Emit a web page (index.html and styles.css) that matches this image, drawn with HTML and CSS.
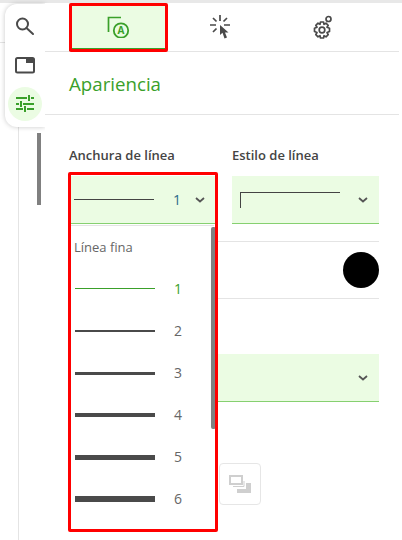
FILE: index.html
```html
<!DOCTYPE html>
<html lang="es">
<head>
    <meta charset="UTF-8">
    <meta name="viewport" content="width=device-width, initial-scale=1.0">
    <title>Apariencia</title>
    <link rel="stylesheet" href="styles.css">
</head>
<body>
    <div class="app">
        <!-- Fondo del documento y barra de iconos -->
        <div class="side">
            <div class="doc-rule"></div>
            <div class="doc-line"></div>
            <div class="doc-thumb"></div>
            <div class="toolbar">
                <div class="tool">
                    <svg width="22" height="22" viewBox="0 0 22 22" fill="none" stroke="#4a4a4a" stroke-width="2">
                        <circle cx="8.500" cy="9" r="5.500"/>
                        <path d="M12.500 13L19 19" stroke-linecap="round"/>
                    </svg>
                </div>
                <div class="tool">
                    <svg width="22" height="22" viewBox="0 0 22 22">
                        <rect x="2" y="4" width="18" height="14.500" rx="1.500" fill="none" stroke="#4a4a4a" stroke-width="2"/>
                        <rect x="12" y="4" width="8" height="5" fill="#4a4a4a"/>
                    </svg>
                </div>
                <div class="tool tool-on">
                    <svg width="22" height="22" viewBox="0 0 22 22" fill="none" stroke="#3aa02a" stroke-width="2">
                        <path d="M2 5H13M17 5H20M15 2V8M2 11H5M9 11H20M7 8V14M2 16H9M13 16H20M11 13V19"/>
                    </svg>
                </div>
            </div>
        </div>

        <div class="panel">
            <div class="tabs">
                <div class="tab tab-on">
                    <svg width="24" height="24" viewBox="0 0 24 24" fill="none" stroke="#3aa02a" stroke-width="1.700">
                        <path d="M15 3.500H2.500V18"/>
                        <circle cx="15" cy="16.500" r="7.200" stroke-width="1.800"/>
                        <text x="15" y="20.300" text-anchor="middle" class="tab-letter">A</text>
                    </svg>
                </div>
                <div class="tab">
                    <svg width="24" height="26" viewBox="0 0 24 26" fill="none" stroke="#4a4a4a" stroke-width="1.700">
                        <path d="M12 2V8M2 12H8M16 12H22M5 5L8.500 8.500M19 5L15.500 8.500M5 19L8.500 15.500"/>
                        <path d="M12 12V22L14.500 19.800L16.500 25.500L19 24.500L17 19.500H20.500Z" fill="#4a4a4a" stroke="none"/>
                    </svg>
                </div>
                <div class="tab">
                    <svg width="24" height="26" viewBox="0 0 24 26" fill="none" stroke="#4a4a4a" stroke-width="1.700">
                        <circle cx="12" cy="17" r="2.800"/>
                        <path d="M10.500 9H13.500L14 11.300L16 10.200L18.200 12.300L17 14.300L19.500 15.300V18.500L17 19.500L18.200 21.700L16 23.800L14 22.700L13.500 25H10.500L10 22.700L8 23.800L5.800 21.700L7 19.500L4.500 18.500V15.300L7 14.300L5.800 12.300L8 10.200L10 11.300Z" stroke-linejoin="round"/>
                        <circle cx="18.500" cy="6" r="2.500"/>
                    </svg>
                </div>
            </div>

            <div class="section-head">
                <h2>Apariencia</h2>
            </div>

            <div class="form">
                <div class="fields">
                    <div class="field">
                        <label>Anchura de línea</label>
                        <div class="select">
                            <span class="sample"></span>
                            <span class="value">1</span>
                            <svg class="chev" width="10" height="6" viewBox="0 0 10 6"><path d="M1 1L5 4.500L9 1" fill="none" stroke="#555" stroke-width="1.800"/></svg>
                        </div>
                    </div>
                    <div class="field">
                        <label>Estilo de línea</label>
                        <div class="select select-style">
                            <span class="corner"></span>
                            <svg class="chev" width="10" height="6" viewBox="0 0 10 6"><path d="M1 1L5 4.500L9 1" fill="none" stroke="#555" stroke-width="1.800"/></svg>
                        </div>
                    </div>
                </div>
                <div class="color-row"><span class="swatch"></span></div>
                <div class="select select-wide">
                    <svg class="chev" width="10" height="6" viewBox="0 0 10 6"><path d="M1 1L5 4.500L9 1" fill="none" stroke="#555" stroke-width="1.800"/></svg>
                </div>
                <div class="actions">
                    <button class="icon-btn">
                        <svg width="22" height="18" viewBox="0 0 22 18">
                            <rect x="1" y="1" width="12" height="8" fill="none" stroke="#cfcfcf" stroke-width="2"/>
                            <path d="M4 11.500H15V6" fill="none" stroke="#cfcfcf" stroke-width="1"/>
                            <path d="M8 18V14H17V8H22V18Z" fill="#cfcfcf"/>
                        </svg>
                    </button>
                </div>
            </div>

            <!-- Lista desplegable abierta -->
            <div class="dropdown">
                <div class="drop-title">Línea fina</div>
                <div class="option option-on"><span class="bar bar-1"></span><span class="num">1</span></div>
                <div class="option"><span class="bar bar-2"></span><span class="num">2</span></div>
                <div class="option"><span class="bar bar-3"></span><span class="num">3</span></div>
                <div class="option"><span class="bar bar-4"></span><span class="num">4</span></div>
                <div class="option"><span class="bar bar-5"></span><span class="num">5</span></div>
                <div class="option"><span class="bar bar-6"></span><span class="num">6</span></div>
                <div class="scroll-thumb"></div>
            </div>

            <!-- Marcas rojas -->
            <div class="mark mark-tab"></div>
            <div class="mark mark-list"></div>
        </div>
    </div>
</body>
</html>
```

FILE: styles.css
```css
html, body {
    margin: 0;
    height: 100%;
    overflow: hidden;
    background: #fff;
    font-family: "Open Sans", "Noto Sans", sans-serif;
}
.app {
    display: flex;
    width: 402px;
    height: 540px;
    border-top: 3px solid #e8e8e8;
    box-sizing: border-box;
}
.side {
    position: relative;
    width: 45px;
    flex: none;
    background: #fff;
}
.doc-rule {
    position: absolute;
    left: 0;
    top: 39px;
    width: 6px;
    height: 1px;
    background: #e4e4e4;
}
.doc-line {
    position: absolute;
    left: 18px;
    top: 122px;
    bottom: 0;
    width: 1px;
    background: #e4e4e4;
}
.doc-thumb {
    position: absolute;
    left: 37px;
    top: 130px;
    width: 4px;
    height: 72px;
    background: #808080;
}
.toolbar {
    position: absolute;
    left: 5px;
    top: 1px;
    width: 40px;
    height: 123px;
    box-sizing: border-box;
    padding-top: 5px;
    background: #fff;
    border-radius: 12px 0 0 12px;
    box-shadow: 0 0 5px rgba(0, 0, 0, 0.22);
    display: flex;
    flex-direction: column;
    align-items: center;
    gap: 5px;
}
.tool {
    width: 34px;
    height: 34px;
    display: flex;
    align-items: center;
    justify-content: center;
}
.tool-on {
    background: #ebfce3;
    border-radius: 50%;
}
.panel {
    position: relative;
    width: 354px;
    flex: none;
    background: #fff;
}
.tabs {
    display: flex;
    padding-left: 24px;
    height: 48px;
    border-bottom: 1px solid #e4e4e4;
}
.tab {
    width: 98px;
    margin-right: 4px;
    display: flex;
    align-items: center;
    justify-content: center;
    box-sizing: border-box;
    padding-bottom: 2px;
}
.tab-on {
    background: #ebfce3;
    border-bottom: 3px solid #3aa02a;
    padding-bottom: 0;
}
.tab-letter {
    font: 700 10px "Open Sans", sans-serif;
    fill: #3aa02a;
    stroke: none;
}
.section-head {
    height: 63px;
    box-sizing: border-box;
    padding: 19px 0 0 24px;
    border-bottom: 1px solid #e4e4e4;
}
h2 {
    margin: 0;
    font-size: 18.700px;
    font-weight: 400;
    line-height: 26px;
    color: #3aa02a;
}
.form {
    width: 310px;
    margin-left: 24px;
    padding-top: 32px;
}
.fields {
    display: grid;
    grid-template-columns: 147px 147px;
    column-gap: 16px;
}
label {
    display: block;
    font-size: 13px;
    font-weight: 600;
    line-height: 17px;
    color: #444;
    margin-bottom: 12px;
}
.select {
    height: 48px;
    box-sizing: border-box;
    background: #ebfce3;
    border-bottom: 1px solid #86d070;
    display: flex;
    align-items: center;
    padding: 0 11px 0 5px;
    position: relative;
}
.sample {
    width: 80px;
    height: 1px;
    background: #444;
}
.value {
    margin-left: 19px;
    font-size: 14px;
    color: #2a6a8a;
}
.chev {
    margin-left: auto;
}
.corner {
    width: 100px;
    height: 16px;
    margin: 0 0 0 3px;
    border-top: 1px solid #444;
    border-left: 1px solid #444;
    box-sizing: border-box;
}
.color-row {
    height: 58px;
    margin-top: 17px;
    box-sizing: border-box;
    border-top: 1px solid #e4e4e4;
    border-bottom: 1px solid #e4e4e4;
    display: flex;
    justify-content: flex-end;
    align-items: center;
}
.swatch {
    width: 36px;
    height: 36px;
    border-radius: 50%;
    background: #000;
}
.select-wide {
    margin-top: 55px;
}
.actions {
    margin-top: 61px;
    padding-left: 150px;
    display: flex;
}
.icon-btn {
    width: 42px;
    height: 42px;
    padding: 0;
    background: #fff;
    border: 1px solid #e6e6e6;
    border-radius: 4px;
    display: flex;
    align-items: center;
    justify-content: center;
}
.dropdown {
    position: absolute;
    left: 26px;
    top: 222px;
    width: 143px;
    height: 304px;
    background: #fff;
    border-top: 1px solid #e4e4e4;
}
.drop-title {
    height: 41px;
    padding: 12px 0 0 3px;
    box-sizing: border-box;
    font-size: 13px;
    line-height: 18px;
    color: #666;
}
.option {
    height: 42px;
    display: flex;
    align-items: center;
    padding-left: 4px;
    color: #666;
    font-size: 14px;
}
.bar {
    width: 80px;
    margin-top: 2px;
    background: #4a4a4a;
}
.num {
    margin-left: 19px;
}
.option-on {
    color: #3aa02a;
}
.option-on .bar {
    margin-top: 0;
    background: #3aa02a;
}
.bar-1 { height: 1px; }
.bar-2 { height: 2px; }
.bar-3 { height: 3px; }
.bar-4 { height: 4px; }
.bar-5 { height: 5px; }
.bar-6 { height: 6px; }
.scroll-thumb {
    position: absolute;
    right: -2px;
    top: 1px;
    width: 5px;
    height: 202px;
    background: #808080;
    border-radius: 2px;
}
.mark {
    position: absolute;
    border: 3px solid #f00;
    border-radius: 2px;
    box-sizing: border-box;
    pointer-events: none;
}
.mark-tab {
    left: 24px;
    top: 0;
    width: 99px;
    height: 49px;
}
.mark-list {
    left: 23px;
    top: 169px;
    width: 150px;
    height: 360px;
}
```
